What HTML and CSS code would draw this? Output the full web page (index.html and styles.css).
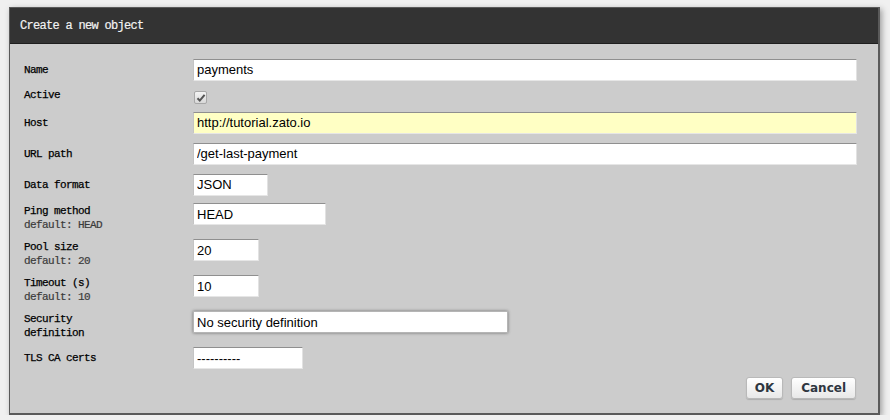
FILE: index.html
```html
<!DOCTYPE html>
<html lang="en">
  <head>
    <meta charset="UTF-8" />
    <title>Create a new object</title>
    <link rel="stylesheet" href="styles.css">
  </head>
  <body>
    <div class="dialog">
      <div class="dialog-title">Create a new object</div>
      <form class="dialog-body">
        <div class="row">
          <label class="label">Name</label>
          <input type="text" class="field wide" value="payments" />
        </div>
        <div class="row row-check">
          <label class="label">Active</label>
          <span class="checkbox">
            <svg width="10" height="10" viewBox="0 0 10 10">
              <path d="M1.5 5.2 L3.8 7.6 L8.6 1.8" fill="none" stroke="#555" stroke-width="2" />
            </svg>
          </span>
        </div>
        <div class="row">
          <label class="label">Host</label>
          <input type="text" class="field wide required" value="http://tutorial.zato.io" />
        </div>
        <div class="row">
          <label class="label">URL path</label>
          <input type="text" class="field wide" value="/get-last-payment" />
        </div>
        <div class="row">
          <label class="label">Data format</label>
          <input type="text" class="field format" value="JSON" />
        </div>
        <div class="row row-tall">
          <label class="label">Ping method<span class="hint">default: HEAD</span></label>
          <input type="text" class="field ping" value="HEAD" />
        </div>
        <div class="row row-tall">
          <label class="label">Pool size<span class="hint">default: 20</span></label>
          <input type="text" class="field small" value="20" />
        </div>
        <div class="row row-tall">
          <label class="label">Timeout (s)<span class="hint">default: 10</span></label>
          <input type="text" class="field small" value="10" />
        </div>
        <div class="row row-tall">
          <label class="label">Security<br />definition</label>
          <select class="field security">
            <option>No security definition</option>
          </select>
        </div>
        <div class="row row-last">
          <label class="label">TLS CA certs</label>
          <select class="field certs">
            <option>----------</option>
          </select>
        </div>
        <div class="buttons">
          <button type="button" class="btn-ok">OK</button>
          <button type="button">Cancel</button>
        </div>
      </form>
    </div>
  </body>
</html>
```

FILE: styles.css
```css
body {
  margin: 0;
  padding: 7px 0 0 9px;
  background-color: #f0f0f0;
}

.dialog {
  width: 871px;
  box-sizing: border-box;
  border: 1px solid #5a5a5a;
  border-right-width: 2px;
  border-bottom-width: 2px;
  background-color: #cccccc;
  box-shadow: 2px 2px 6px rgba(0, 0, 0, 0.35);
}

.dialog-title {
  height: 35px;
  line-height: 36px;
  padding-left: 10px;
  background-color: #333333;
  border-bottom: 1px solid #1e1e1e;
  color: #f2f2f2;
  font-family: "Liberation Mono", monospace;
  font-size: 12px;
  letter-spacing: -0.7px;
  -webkit-text-stroke: 0.2px #f2f2f2;
}

.dialog-body {
  margin: 0;
  padding: 10px 21px 14px 14px;
}

.row {
  display: flex;
  align-items: center;
  height: 31px;
}

.row-check {
  height: 22px;
  align-items: flex-start;
  padding-top: 3px;
  box-sizing: border-box;
}

.row-tall {
  height: 36px;
  align-items: flex-start;
  padding-top: 3px;
  box-sizing: border-box;
}

.row-last {
  align-items: flex-start;
  padding-top: 3px;
  box-sizing: border-box;
}

.row-last .label {
  padding-top: 4px;
}

.label {
  width: 169px;
  flex-shrink: 0;
  font-family: "Liberation Mono", monospace;
  font-size: 11px;
  letter-spacing: -0.6px;
  line-height: 14px;
  color: #000;
  -webkit-text-stroke: 0.25px #000;
}

.row-tall .label {
  padding-top: 1px;
}

.hint {
  display: block;
  color: #3a3a3a;
  -webkit-text-stroke: 0.2px #3a3a3a;
}

.field {
  height: 22px;
  box-sizing: border-box;
  margin: 0;
  padding: 0 3px;
  border: 1px solid;
  border-color: #8f8f8f #e2e2e2 #e6e6e6 #c4c4c4;
  background-color: #fff;
  font-family: "Liberation Sans", Arial, sans-serif;
  font-size: 13px;
  color: #000;
  border-radius: 0;
  outline: none;
}

select.field {
  appearance: none;
  -webkit-appearance: none;
}

.wide {
  width: 664px;
}

.required {
  background-color: #ffffc4;
}

.format {
  width: 75px;
}

.ping {
  width: 133px;
}

.small {
  width: 66px;
}

.security {
  width: 315px;
  border: 1px solid #b5b5b5;
  box-shadow: 0 0 3px rgba(0, 0, 0, 0.45);
}

.certs {
  width: 110px;
}

.checkbox {
  display: flex;
  align-items: center;
  justify-content: center;
  width: 11px;
  height: 11px;
  margin-left: 1px;
  margin-top: 3px;
  border: 1px solid #a8a8a8;
  border-radius: 2px;
  background: linear-gradient(#f4f4f4, #d8d8d8);
}

.buttons {
  display: flex;
  justify-content: flex-end;
  gap: 8px;
  margin-top: 2px;
  padding-right: 1px;
}

.buttons button {
  height: 22px;
  padding: 0 9px;
  border: 1px solid #b9b9b9;
  border-radius: 3px;
  background: linear-gradient(#ffffff, #e8e8e8);
  box-shadow: 0 1px 1px rgba(0, 0, 0, 0.15);
  font-family: "DejaVu Sans", Verdana, sans-serif;
  font-size: 12px;
  font-weight: bold;
  color: #2e3640;
  cursor: pointer;
}

.buttons .btn-ok {
  padding: 0 8px;
}
```
